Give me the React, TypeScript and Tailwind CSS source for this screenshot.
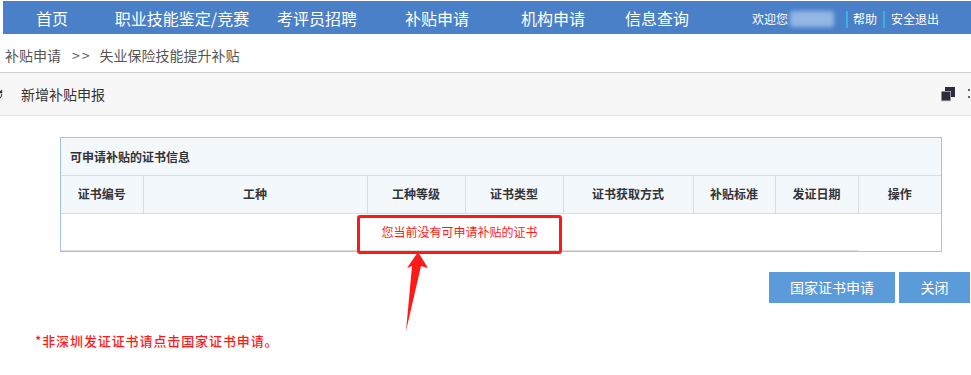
import { RotateCw } from 'lucide-react';

const navItems = [
  { label: '首页', w: 'w-[98px]' },
  { label: '职业技能鉴定/竞赛', w: 'w-[162px]' },
  { label: '考评员招聘', w: 'w-[108px]' },
  { label: '补贴申请', w: 'w-[132px]' },
  { label: '机构申请', w: 'w-[100px]' },
  { label: '信息查询', w: 'w-[108px]' },
];

const columns = [
  { label: '证书编号', w: 'w-[82px]' },
  { label: '工种', w: 'w-[224px]' },
  { label: '工种等级', w: 'w-[98px]' },
  { label: '证书类型', w: 'w-[98px]' },
  { label: '证书获取方式', w: 'w-[130px]' },
  { label: '补贴标准', w: 'w-[82px]' },
  { label: '发证日期', w: 'w-[83px]' },
  { label: '操作', w: 'w-[83px]' },
];

const font = { fontFamily: '"Noto Sans CJK SC", "Noto Sans", sans-serif' };

export default function App() {
  return (
    <div className="relative w-[971px] h-[375px] overflow-hidden bg-white" style={font}>
      {/* Top navigation */}
      <div className="pt-[1px] pl-[3px]">
        <div className="flex items-center h-[33px] bg-[#4a80c8] text-white">
          {navItems.map((item) => (
            <div key={item.label} className={`${item.w} text-center text-[16px] leading-none`}>
              {item.label}
            </div>
          ))}
          <div className="ml-auto flex items-center pr-[32px] text-[12px] leading-none pt-[3px]">
            <span>欢迎您</span>
            <div className="ml-[2px] w-[44px] h-[16px] rounded-[3px] bg-[#93b6e4] blur-[2px]" />
            <span className="ml-[12px] w-[2px] h-[17px] bg-[#36b4dc]" />
            <span className="ml-[5px]">帮助</span>
            <span className="ml-[6px] w-[2px] h-[17px] bg-[#36b4dc]" />
            <span className="ml-[6px]">安全退出</span>
          </div>
        </div>
      </div>

      {/* Breadcrumb */}
      <div className="h-[39px] flex items-center pl-[5px] pt-[4px] text-[14px] text-[#555] border-b border-[#cfcfcf]">
        <span>补贴申请</span>
        <span className="ml-[11px] tracking-[2px]">&gt;&gt;</span>
        <span className="ml-[8px]">失业保险技能提升补贴</span>
      </div>

      {/* Panel header */}
      <div className="h-[43px] flex items-center bg-[#f7f7f7] border-b border-[#e6e6e6] text-[14px] text-[#333]">
        <RotateCw className="-ml-[8px] h-[11px] w-[11px] text-[#333]" strokeWidth={2.5} />
        <span className="ml-[18px]">新增补贴申报</span>
        <div className="ml-auto flex items-center">
          <svg width="16" height="16" viewBox="0 0 16 16" className="mr-[11px]">
            <rect x="5" y="1" width="10" height="10" fill="#2c2c3e" />
            <rect x="1" y="5" width="10" height="10" fill="#f7f7f7" />
            <rect x="1.5" y="5.5" width="9" height="9.5" fill="#2c2c3e" />
            <rect x="1" y="14.5" width="10" height="1" fill="#c8c8d8" />
          </svg>
          <svg width="4" height="16" viewBox="0 0 4 16">
            <rect x="1" y="3" width="2" height="2" fill="#666" />
            <rect x="1" y="10" width="2" height="2" fill="#666" />
          </svg>
        </div>
      </div>

      {/* Certificate table */}
      <div className="ml-[60px] mt-[21px] w-[882px] border border-[#a5c2ea]">
        <div className="h-[38px] flex items-center pl-[9px] bg-[#f3f8fd] border-b border-[#dcdcdc] text-[12px] font-bold text-[#333]">
          可申请补贴的证书信息
        </div>
        <table className="border-collapse text-[12px] text-[#333]">
          <thead>
            <tr className="h-[37px] bg-[#f3f8fd]">
              {columns.map((c, i) => (
                <th
                  key={c.label}
                  className={`${c.w} p-0 font-bold text-center border-b border-[#dcdcdc] ${
                    i < columns.length - 1 ? 'border-r' : ''
                  }`}
                >
                  {c.label}
                </th>
              ))}
            </tr>
          </thead>
          <tbody>
            <tr className="h-[37px]">
              <td colSpan={7} className="p-0 text-center text-[#ff1a1a] border-b border-[#dcdcdc]">
                您当前没有可申请补贴的证书
              </td>
            </tr>
          </tbody>
        </table>
      </div>

      {/* Buttons */}
      <div className="mt-[20px] flex justify-end gap-[4px] pr-[1px]">
        <button className="w-[126px] h-[31px] bg-[#5b9bda] text-white text-[14px]">国家证书申请</button>
        <button className="w-[71px] h-[31px] bg-[#5b9bda] text-white text-[14px]">关闭</button>
      </div>

      {/* Note */}
      <div className="mt-[28px] pl-[35px] text-[13px] font-medium text-[#ff1a1a] tracking-[0.9px]">
        *非深圳发证证书请点击国家证书申请。
      </div>

      {/* Annotation overlay */}
      <div className="absolute left-[357px] top-[215px] w-[205px] h-[39px] border-[3px] border-[#ff1a1a] rounded-[3px]" />
      <svg className="absolute left-0 top-0" width="971" height="375" viewBox="0 0 971 375">
        <polygon
          points="418,252 428,268 421,266 406,331 412,266 407,268"
          fill="#ff1a1a"
        />
      </svg>
    </div>
  );
}
